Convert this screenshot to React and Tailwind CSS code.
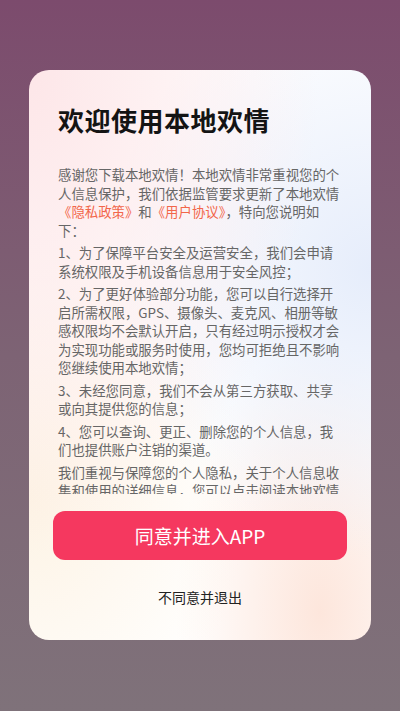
import React from "react";

const font = { fontFamily: '"Noto Sans CJK SC", "Noto Sans", sans-serif' };

function Link({ children }) {
  return <span className="text-[#f2664a]">{children}</span>;
}

export default function App() {
  return (
    <div
      className="w-[400px] h-[711px] bg-gradient-to-b from-[#7c4b6d] via-[#7d6374] to-[#7f727a] flex justify-center pt-[70px] overflow-hidden"
      style={font}
    >
      <div className="w-[342px] h-[570px] rounded-[20px] flex flex-col overflow-hidden bg-[radial-gradient(ellipse_at_0%_0%,#fde6e8_0%,rgba(253,232,234,0)_60%),radial-gradient(ellipse_at_100%_35%,#e6edfb_0%,rgba(230,237,251,0)_55%),radial-gradient(ellipse_at_0%_75%,#fdf3e4_0%,rgba(253,243,228,0)_45%),radial-gradient(ellipse_at_85%_95%,#fde6dc_0%,rgba(253,230,220,0)_35%),linear-gradient(#ffffff,#ffffff)]">
        <h1 className="mt-[34px] px-[29px] text-[26px] leading-[31px] font-bold text-[#141414] tracking-[0.5px]">
          欢迎使用本地欢情
        </h1>
        <div className="mt-[30px] pl-[29px] pr-[29px] h-[329px] overflow-hidden text-[13.4px] leading-[18.5px] text-[#666666] flex flex-col gap-[4px]">
          <p>
            感谢您下载本地欢情！本地欢情非常重视您的个人信息保护，我们依据监管要求更新了本地欢情
            <Link>《隐私政策》</Link>和<Link>《用户协议》</Link>，特向您说明如下：
          </p>
          <p>1、为了保障平台安全及运营安全，我们会申请系统权限及手机设备信息用于安全风控；</p>
          <p>
            2、为了更好体验部分功能，您可以自行选择开启所需权限，GPS、摄像头、麦克风、相册等敏感权限均不会默认开启，只有经过明示授权才会为实现功能或服务时使用，您均可拒绝且不影响您继续使用本地欢情；
          </p>
          <p>3、未经您同意，我们不会从第三方获取、共享或向其提供您的信息；</p>
          <p>4、您可以查询、更正、删除您的个人信息，我们也提供账户注销的渠道。</p>
          <p>
            我们重视与保障您的个人隐私，关于个人信息收集和使用的详细信息，您可以点击阅读本地欢情
            <Link>《隐私政策》</Link>和<Link>《用户协议》</Link>进行了解。
          </p>
        </div>
        <button className="mt-[17px] mx-[24px] h-[49px] rounded-[12px] bg-[#f5385f] text-white text-[19px] leading-none flex items-center justify-center">
          同意并进入APP
        </button>
        <button className="mt-[27px] self-center text-[14px] leading-[20px] text-[#222222]">
          不同意并退出
        </button>
      </div>
    </div>
  );
}
